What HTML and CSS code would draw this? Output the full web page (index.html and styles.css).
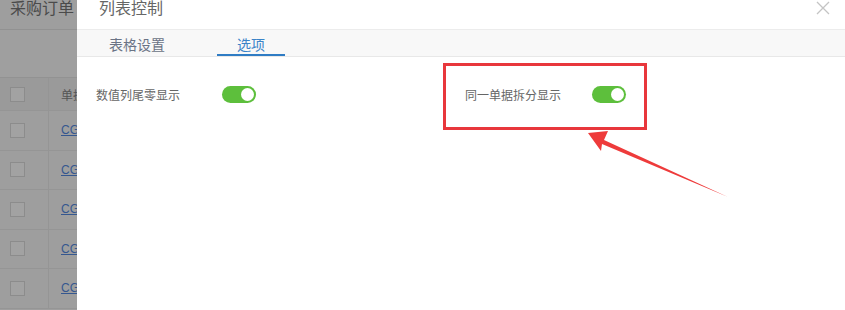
FILE: index.html
```html
<!DOCTYPE html>
<html lang="zh">
<head>
<meta charset="utf-8">
<link rel="stylesheet" href="styles.css">
</head>
<body>
<div class="page">
  <aside class="backdrop">
    <div class="bd-title">采购订单</div>
    <div class="bd-toolbar"></div>
    <div class="bd-row bd-head"><span class="cb"></span><span class="cell">单据</span></div>
    <div class="bd-row"><span class="cb"></span><span class="cell link">CG</span></div>
    <div class="bd-row"><span class="cb"></span><span class="cell link">CG</span></div>
    <div class="bd-row"><span class="cb"></span><span class="cell link">CG</span></div>
    <div class="bd-row"><span class="cb"></span><span class="cell link">CG</span></div>
    <div class="bd-row"><span class="cb"></span><span class="cell link">CG</span></div>
  </aside>
  <section class="modal">
    <header class="modal-head">
      <span class="modal-title">列表控制</span>
      <span class="close" aria-label="关闭">
        <svg width="14" height="14" viewBox="0 0 14 14"><path d="M1 1L13 13M13 1L1 13" stroke="#c4c4c4" stroke-width="1.3" fill="none"/></svg>
      </span>
    </header>
    <nav class="tabs">
      <span class="tab">表格设置</span>
      <span class="tab active">选项</span>
    </nav>
    <div class="options">
      <div class="opt">
        <span class="opt-label">数值列尾零显示</span>
        <span class="switch on"><span class="knob"></span></span>
      </div>
      <div class="opt opt-2">
        <span class="opt-label">同一单据拆分显示</span>
        <span class="switch on"><span class="knob"></span></span>
      </div>
    </div>
  </section>
  <div class="mark-box"></div>
  <svg class="mark-arrow" width="845" height="310" viewBox="0 0 845 310">
    <polygon points="588,133 608,131 604,140 728,197 602,144 601,151" fill="#ee3b3b"/>
  </svg>
</div>
</body>
</html>
```
FILE: styles.css
```css
* { box-sizing: border-box; margin: 0; padding: 0; }
html, body { width: 845px; height: 310px; overflow: hidden; background: #fff; }
body { font-family: "Microsoft YaHei", "Noto Sans CJK SC", sans-serif; }
.page { position: relative; display: flex; width: 845px; height: 310px; }

.backdrop {
  width: 77px; flex: none; background: #9e9e9e;
  display: flex; flex-direction: column; overflow: hidden;
}
.bd-title {
  height: 30px; flex: none; padding-left: 10px; line-height: 14px;
  font-size: 16px; color: #4b4b4b; white-space: nowrap;
  border-bottom: 1px solid #919191;
}
.bd-toolbar { height: 48px; flex: none; border-bottom: 1px solid #929292; background: #9f9f9f; }
.bd-row {
  height: 39.5px; display: flex; align-items: center;
  border-bottom: 1px solid #959595; flex: none;
}
.bd-head { height: 33px; background: #9a9a9a; }
.cb {
  width: 15px; height: 15px; margin-left: 10px; border: 1px solid #8c8c8c;
  background: #a2a2a2; flex: none;
}
.cell {
  margin-left: 23px; padding-left: 12px; height: 100%;
  border-left: 1px solid #959595; display: flex; align-items: center;
  font-size: 12px; color: #555; white-space: nowrap;
}
.cell.link { color: #35578f; text-decoration: underline; font-family: "Liberation Sans", sans-serif; font-size: 12px; }

.modal { flex: 1; background: #fff; display: flex; flex-direction: column; }
.modal-head {
  height: 29px; flex: none; display: flex; justify-content: space-between; align-items: flex-start;
  padding: 0 15px 0 22px;
}
.modal-title { font-size: 16px; color: #666; line-height: 14px; }
.close { margin-top: 1px; display: flex; }
.tabs {
  height: 28px; flex: none; background: #f8f8f8; border-top: 1px solid #ececec; border-bottom: 1px solid #e8e8e8;
  display: flex; align-items: stretch; padding-left: 20px;
}
.tab {
  font-size: 14px; color: #6a7385; display: flex; align-items: center; justify-content: center;
  width: 80px; padding-top: 1px;
}
.tab.active { color: #3b84c8; width: 68px; margin-left: 40px; border-bottom: 2px solid #2f7cc4; padding-top: 3px; }

.options { display: flex; padding: 29px 0 0 19px; }
.opt { display: flex; align-items: center; height: 16px; }
.opt-label { font-size: 12px; color: #666; }
.opt .switch { margin-left: 42px; }
.opt-2 { margin-left: 209px; }
.opt-2 .switch { margin-left: 31px; }

.switch {
  width: 34px; height: 17px; border-radius: 9px; background: #5dbf3c;
  position: relative; display: inline-block; flex: none;
}
.knob {
  position: absolute; top: 2px; right: 2px; width: 13px; height: 13px;
  border-radius: 50%; background: #fff;
}

.mark-box {
  position: absolute; left: 443px; top: 63px; width: 204px; height: 67px;
  border: 3px solid #e8373c;
}
.mark-arrow { position: absolute; left: 0; top: 0; pointer-events: none; }
```
